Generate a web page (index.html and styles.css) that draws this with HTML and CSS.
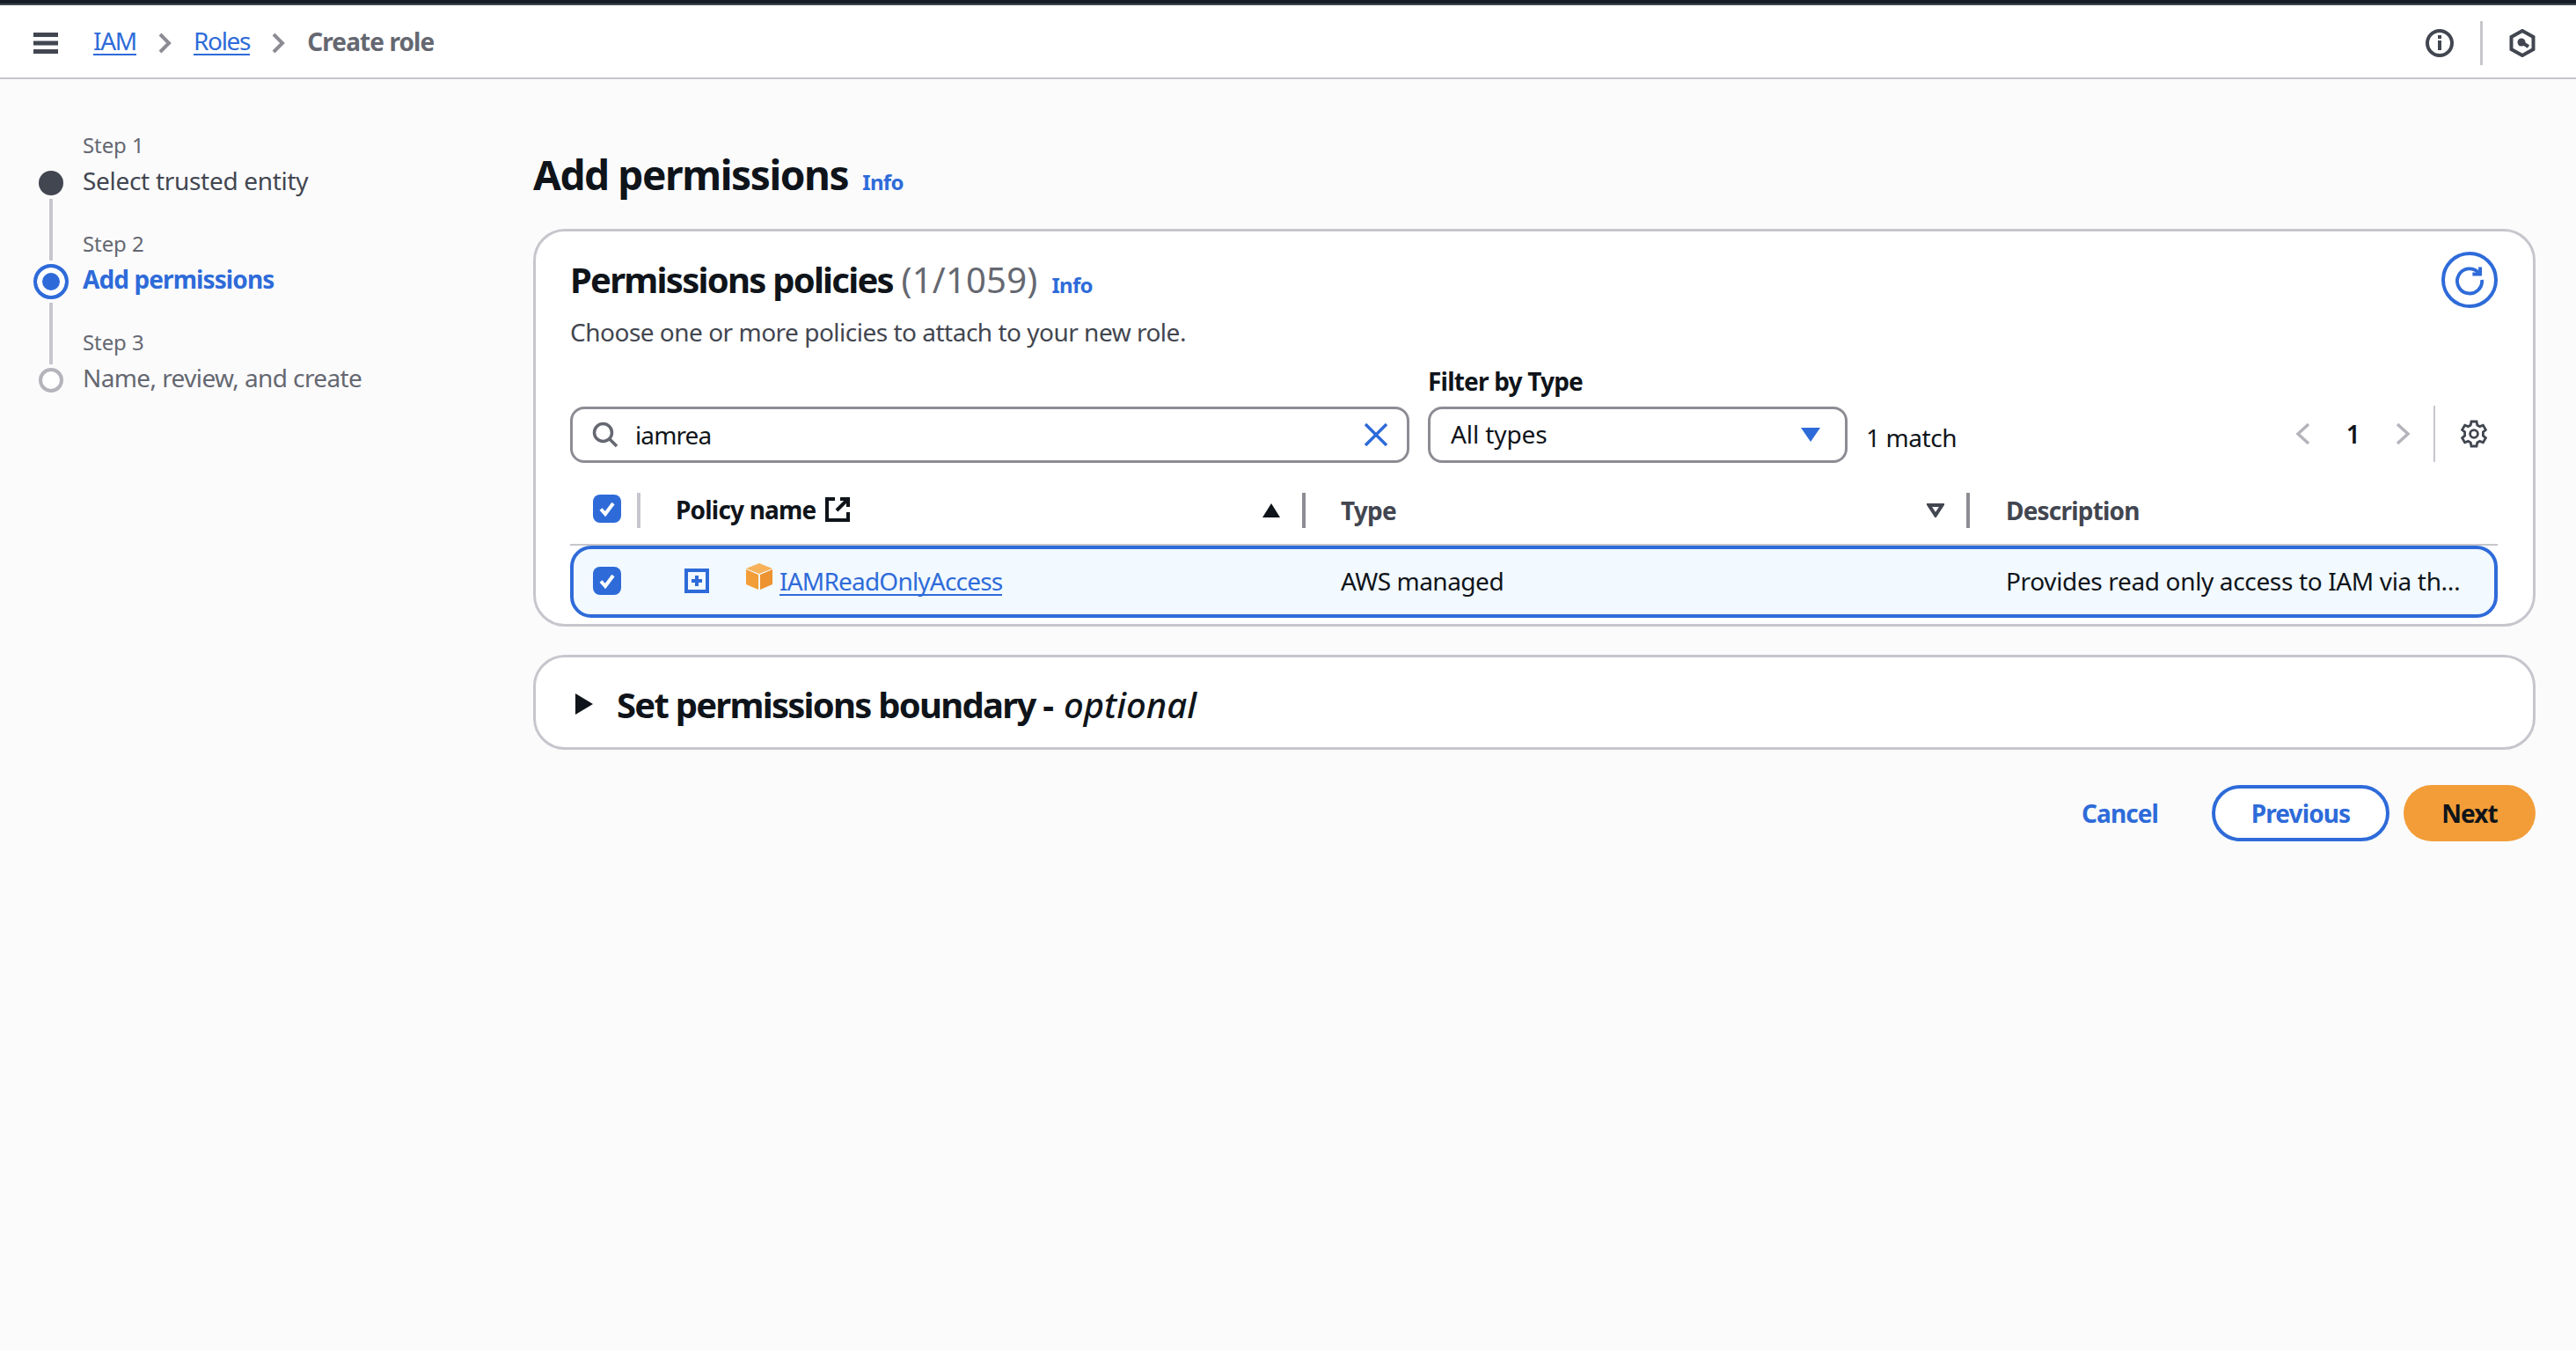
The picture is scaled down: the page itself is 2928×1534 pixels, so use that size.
FILE: index.html
```html
<!DOCTYPE html>
<html lang="en">
<head>
<meta charset="utf-8">
<title>Create role</title>
<link rel="stylesheet" href="styles.css">
</head>
<body>
<header class="topbar">
  <svg class="icon-menu" viewBox="0 0 28 24"><path d="M0 2.500h28M0 12h28M0 21.500h28"/></svg>
  <nav class="crumbs">
    <a class="link crumb-link">IAM</a>
    <svg class="crumb-sep" viewBox="0 0 15 24"><path d="M2 2l10 10L2 22"/></svg>
    <a class="link crumb-link">Roles</a>
    <svg class="crumb-sep" viewBox="0 0 15 24"><path d="M2 2l10 10L2 22"/></svg>
    <span class="crumb-current">Create role</span>
  </nav>
  <div class="top-tools">
    <svg class="icon-info" viewBox="0 0 32 32"><circle cx="16" cy="16" r="14"/><path class="solid" d="M14 13h4v11h-4zM14 7h4v4h-4z"/></svg>
    <span class="tool-divider"></span>
    <svg class="icon-hex" viewBox="0 0 30 32"><path d="M15 2l12.500 7v14L15 30 2.500 23V9z"/><circle class="solid" cx="14" cy="15" r="4.500"/><path d="M14 15l8 5"/></svg>
  </div>
</header>
<div class="layout">
  <aside class="steps">
    <div class="step">
      <span class="step-rail"></span>
      <span class="step-label">Step 1</span>
      <span class="bullet bullet-done"></span>
      <span class="step-title">Select trusted entity</span>
    </div>
    <div class="step">
      <span class="step-rail step-rail-second"></span>
      <span class="step-label">Step 2</span>
      <span class="bullet bullet-active"></span>
      <span class="step-title step-title-active">Add permissions</span>
    </div>
    <div class="step">
      <span class="step-rail step-rail-third"></span>
      <span class="step-label">Step 3</span>
      <span class="bullet bullet-todo"></span>
      <span class="step-title step-title-todo">Name, review, and create</span>
    </div>
  </aside>
  <main class="content">
    <div class="page-head">
      <h1 class="page-title">Add permissions</h1>
      <a class="info">Info</a>
    </div>
    <section class="panel panel-policies">
      <div class="panel-head">
        <div>
          <div class="panel-title-row">
            <h2 class="panel-title panel-title-policies">Permissions policies <span class="count">(1/1059)</span></h2>
            <a class="info">Info</a>
          </div>
          <p class="panel-desc">Choose one or more policies to attach to your new role.</p>
        </div>
        <button class="refresh">
          <svg class="icon-refresh" viewBox="0 0 32 32"><path d="M25 8.500A12.500 12.500 0 1 0 28.500 16"/><path class="solid" d="M19 12h9.500V3h-3.500v5.500h-6z"/></svg>
        </button>
      </div>
      <div class="filters">
        <div class="search">
          <svg class="icon-search" viewBox="0 0 30 30"><circle cx="12.500" cy="12.500" r="10"/><path d="M20 20l8 8"/></svg>
          <span class="search-text">iamrea</span>
          <svg class="icon-clear" viewBox="0 0 26 26"><path d="M1 1l24 24M25 1L1 25"/></svg>
        </div>
        <div class="filter-type">
          <label class="filter-label">Filter by Type</label>
          <div class="select">
            <span class="select-value">All types</span>
            <svg class="icon-caret" viewBox="0 0 22 16"><path d="M0 0h22L11 16z"/></svg>
          </div>
        </div>
        <span class="matches">1 match</span>
        <div class="pager">
          <svg class="pager-chev" viewBox="0 0 17 26"><path d="M15 2L3 13l12 11"/></svg>
          <span class="pager-num">1</span>
          <svg class="pager-chev" viewBox="0 0 17 26"><path d="M2 2l12 11L2 24"/></svg>
          <span class="pager-divider"></span>
          <svg class="icon-gear" viewBox="0 0 16 16"><path d="M6.500 1h3l.4 2 1.400.8 1.900-.7 1.500 2.600-1.500 1.300v2l1.500 1.300-1.500 2.600-1.900-.7-1.400.8-.4 2h-3l-.4-2-1.400-.8-1.900.7-1.500-2.600 1.500-1.300v-2L1.300 5.700l1.500-2.600 1.900.7 1.400-.8z"/><circle cx="8" cy="8" r="2.200"/></svg>
        </div>
      </div>
      <div class="table-head">
        <div class="th th-check">
          <span class="checkbox"><svg viewBox="0 0 32 32"><path d="M9 16.500l5 5.500 9-12"/></svg></span>
        </div>
        <div class="th th-name">
          <span class="th-strong">Policy name</span>
          <svg class="icon-ext" viewBox="0 0 28 28"><path d="M11 2H2v24h24v-9"/><path d="M13 15L26 2M17 2h9v9"/></svg>
          <svg class="sort sort-asc" viewBox="0 0 20 16"><path d="M10 0l10 16H0z"/></svg>
        </div>
        <div class="th th-type">
          <span>Type</span>
          <svg class="sort sort-off" viewBox="0 0 20 16"><path d="M2.500 2h15L10 13.500z"/></svg>
        </div>
        <div class="th th-desc"><span>Description</span></div>
      </div>
      <div class="table-row">
        <div class="td td-check">
          <span class="checkbox"><svg viewBox="0 0 32 32"><path d="M9 16.500l5 5.500 9-12"/></svg></span>
        </div>
        <div class="td td-name">
          <svg class="icon-expand" viewBox="0 0 28 28"><path d="M2 2h24v24H2z"/><path d="M14 8v12M8 14h12"/></svg>
          <svg class="icon-box" viewBox="0 0 30 30"><path class="box-top" d="M15 0l15 6-15 6L0 6z"/><path class="box-left" d="M0 7l14 6v17L0 24z"/><path class="box-right" d="M30 7l-14 6v17l14-6z"/></svg>
          <a class="link policy-link">IAMReadOnlyAccess</a>
        </div>
        <div class="td td-type"><span class="td-text">AWS managed</span></div>
        <div class="td td-desc"><span class="td-text">Provides read only access to IAM via th…</span></div>
      </div>
    </section>
    <section class="panel panel-boundary">
      <svg class="icon-expander" viewBox="0 0 20 24"><path d="M0 0l20 12L0 24z"/></svg>
      <h2 class="panel-title boundary-title">Set permissions boundary - <em class="optional">optional</em></h2>
    </section>
    <div class="actions">
      <a class="btn-cancel">Cancel</a>
      <button class="btn btn-prev">Previous</button>
      <button class="btn btn-next">Next</button>
    </div>
  </main>
</div>
</body>
</html>
```
FILE: styles.css
```css
* { box-sizing: border-box; }
html, body { margin: 0; padding: 0; }
body {
  min-height: 1534px;
  background: #fbfbfc;
  color: #0f141a;
  font-family: "Noto Sans", "Open Sans", sans-serif;
  font-size: 28px;
  line-height: 36px;
  letter-spacing: -0.5px;
}
svg { display: block; flex: none; fill: none; stroke: currentColor; }
svg .solid { fill: currentColor; stroke: none; }
h1, h2, p { margin: 0; }
button { font: inherit; letter-spacing: -0.9px; padding: 0; background: none; border: 0; }
.link { color: #2e6bd9; border-bottom: 2px solid #2e6bd9; line-height: 30px; }

.topbar {
  height: 90px;
  display: flex;
  align-items: center;
  padding: 6px 46px 0 38px;
  background: #fff;
  border-top: 4px solid #161d26;
  border-bottom: 2px solid #c6c6cd;
  box-shadow: inset 0 2px 0 #424650;
}
.icon-menu { width: 28px; height: 24px; stroke: #424650; stroke-width: 5; }
.crumbs { display: flex; align-items: center; margin-left: 40px; gap: 25px; letter-spacing: -1.3px; }
.crumb-link { margin-top: -4px; }
.crumb-sep { width: 15px; height: 24px; stroke: #8c8c94; stroke-width: 4; }
.crumb-current { color: #656871; font-weight: 700; margin-top: -4px; letter-spacing: -0.9px; }
.top-tools { margin-left: auto; display: flex; align-items: center; color: #424650; }
.icon-info { width: 32px; height: 32px; stroke-width: 4; }
.tool-divider { width: 3px; height: 50px; margin: 0 30px 0 30px; background: #c6c6cd; }
.icon-hex { width: 30px; height: 32px; stroke-width: 4; }

.layout { display: grid; grid-template-columns: 606px 1fr; padding-right: 46px; }

.steps { padding: 26px 0 0 38px; }
.step {
  display: grid;
  grid-template-columns: 40px 1fr;
  grid-template-rows: 72px 40px;
  column-gap: 16px;
}
.step-rail { justify-self: center; align-self: end; width: 4px; height: 70px; margin-bottom: 4px; }
.step-rail-second { background: #c6c6cd; }
.step-rail-third { background: #c6c6cd; margin-bottom: -2px; }
.step-label { align-self: end; margin-bottom: 3px; font-size: 24px; line-height: 36px; color: #656871; letter-spacing: -0.1px; padding-bottom: 2px; }
.bullet { justify-self: center; align-self: center; border-radius: 50%; }
.bullet-done { width: 28px; height: 28px; background: #424650; }
.bullet-active { width: 40px; height: 40px; border: 4px solid #2e6bd9; background: #2e6bd9; box-shadow: inset 0 0 0 6px #fff; }
.bullet-todo { width: 28px; height: 28px; border: 4px solid #b4b4bb; background: #fff; }
.step-title { color: #424650; line-height: 40px; margin-top: -3px; letter-spacing: -0.3px; }
.step-title-active { color: #2e6bd9; font-weight: 700; letter-spacing: -0.9px; }
.step-title-todo { color: #656871; letter-spacing: -0.6px; }

.content { padding-top: 80px; }
.page-head { display: flex; align-items: baseline; gap: 16px; height: 90px; }
.page-title { font-size: 46px; line-height: 56px; font-weight: 700; letter-spacing: -1.4px; }
.info { color: #2e6bd9; font-size: 24px; font-weight: 700; letter-spacing: -0.7px; }

.panel { background: #fff; border: 3px solid #c6c6cd; border-radius: 36px; }
.panel-policies { padding: 23px 40px 6px 39px; height: 452px; }
.panel-head { display: flex; justify-content: space-between; }
.panel-title-row { display: flex; align-items: baseline; gap: 16px; margin-top: 8px; }
.panel-title { font-size: 40px; line-height: 48px; font-weight: 700; letter-spacing: -1.75px; }
.count { font-weight: 400; color: #656871; letter-spacing: 0.2px; margin-left: 1px; }
.panel-desc { margin-top: 17px; color: #424650; }
.refresh { width: 64px; height: 64px; border: 4px solid #2e6bd9; border-radius: 50%; background: #fff; color: #2e6bd9; display: flex; align-items: center; justify-content: center; }
.icon-refresh { width: 36px; height: 36px; stroke-width: 3.400; }

.filters { display: flex; align-items: flex-end; margin-top: 21px; }
.search, .select { height: 64px; display: flex; align-items: center; background: #fff; border: 3px solid #8c8c94; border-radius: 16px; }
.search { width: 954px; padding: 0 22px 0 22px; }
.icon-search { width: 30px; height: 30px; stroke: #656871; stroke-width: 3.500; }
.search-text { margin-left: 19px; letter-spacing: -0.9px; }
.icon-clear { margin-left: auto; width: 26px; height: 26px; stroke: #2e6bd9; stroke-width: 3.500; }
.filter-type { width: 477px; margin-left: 21px; }
.filter-label { display: block; font-weight: 700; line-height: 34px; margin-bottom: 12px; letter-spacing: -0.8px; }
.select { padding: 0 28px 0 23px; justify-content: space-between; }
.select-value { letter-spacing: -0.1px; margin-top: -2px; }
.icon-caret { width: 22px; height: 16px; fill: #2e6bd9; stroke: none; }
.matches { margin-left: 21px; line-height: 62px; height: 62px; padding-top: 2px; letter-spacing: -0.4px; }
.pager { margin-left: auto; height: 64px; display: flex; align-items: center; padding-bottom: 2px; padding-right: 11px; }
.pager-chev { width: 17px; height: 26px; stroke: #b4b4bb; stroke-width: 3.500; }
.pager-num { width: 97px; text-align: center; font-weight: 600; flex: none; }
.pager-divider { width: 2px; height: 64px; background: #c6c6cd; margin: 0 28px 0 26px; }
.icon-gear { width: 32px; height: 32px; stroke: #424650; stroke-width: 1.400; }

.table-head {
  display: grid;
  grid-template-columns: 80px 756px 755px 1fr;
  height: 60px;
  margin-top: 34px;
  border-bottom: 2px solid #c6c6cd;
  color: #424650;
  font-weight: 700;
  letter-spacing: -0.8px;
}
.th { display: flex; align-items: center; height: 40px; }
.th-check { padding-left: 26px; border-right: 4px solid #c6c6cd; }
.th-check .checkbox { margin-top: -4px; }
.th-name { padding-left: 40px; color: #0f141a; border-right: 4px solid #8c8c94; }
.th-strong { margin-top: -3px; }
.icon-ext { width: 28px; height: 28px; margin-left: 10px; stroke: #0f141a; stroke-width: 4; margin-top: -2px; }
.sort { width: 20px; height: 16px; margin-left: auto; margin-right: 25px; }
.sort-asc { fill: #0f141a; stroke: none; }
.sort-off { stroke: #424650; stroke-width: 4; }
.th-type { padding-left: 40px; border-right: 4px solid #8c8c94; }
.th-desc { padding-left: 41px; }
.checkbox { width: 32px; height: 32px; border-radius: 8px; background: #2e6bd9; display: block; }
.checkbox svg { width: 32px; height: 32px; stroke: #fff; stroke-width: 4; }

.table-row {
  display: grid;
  grid-template-columns: 76px 756px 755px 1fr;
  height: 82px;
  align-items: center;
  background: #f2f9ff;
  border: 4px solid #2e6bd9;
  border-radius: 24px;
}
.td-check { padding-left: 22px; }
.td-check .checkbox { margin-top: -2px; }
.td-name { display: flex; align-items: center; padding-left: 50px; }
.icon-expand { width: 28px; height: 28px; stroke: #2e6bd9; stroke-width: 4; margin-top: -2px; }
.icon-box { width: 30px; height: 30px; margin: -12px 8px 0 42px; stroke: none; }
.box-top { fill: #f7b25a; }
.box-left { fill: #f29d38; }
.box-right { fill: #ed9330; }
.policy-link { letter-spacing: -0.8px; margin-top: -1px; }
.td-text { display: block; margin-top: -3px; }
.td-type { padding-left: 40px; }
.td-desc { padding-left: 41px; white-space: nowrap; letter-spacing: -0.35px; }

.panel-boundary { margin-top: 32px; height: 108px; display: flex; align-items: center; gap: 27px; padding-left: 45px; }
.boundary-title { letter-spacing: -1.75px; margin-top: 6px; }
.optional { font-weight: 500; letter-spacing: 0; margin-left: 4px; }
.icon-expander { width: 20px; height: 24px; fill: #0f141a; stroke: none; margin-top: 4px; }

.actions { margin-top: 40px; display: flex; align-items: center; justify-content: flex-end; gap: 16px; }
.btn-cancel { color: #2e6bd9; font-weight: 700; margin-right: 45px; letter-spacing: -0.9px; }
.btn { height: 64px; border-radius: 32px; font-weight: 700; }
.btn-prev { width: 202px; border: 4px solid #2e6bd9; background: #fff; color: #2e6bd9; }
.btn-next { width: 150px; background: #f29d38; color: #0f141a; }
```
